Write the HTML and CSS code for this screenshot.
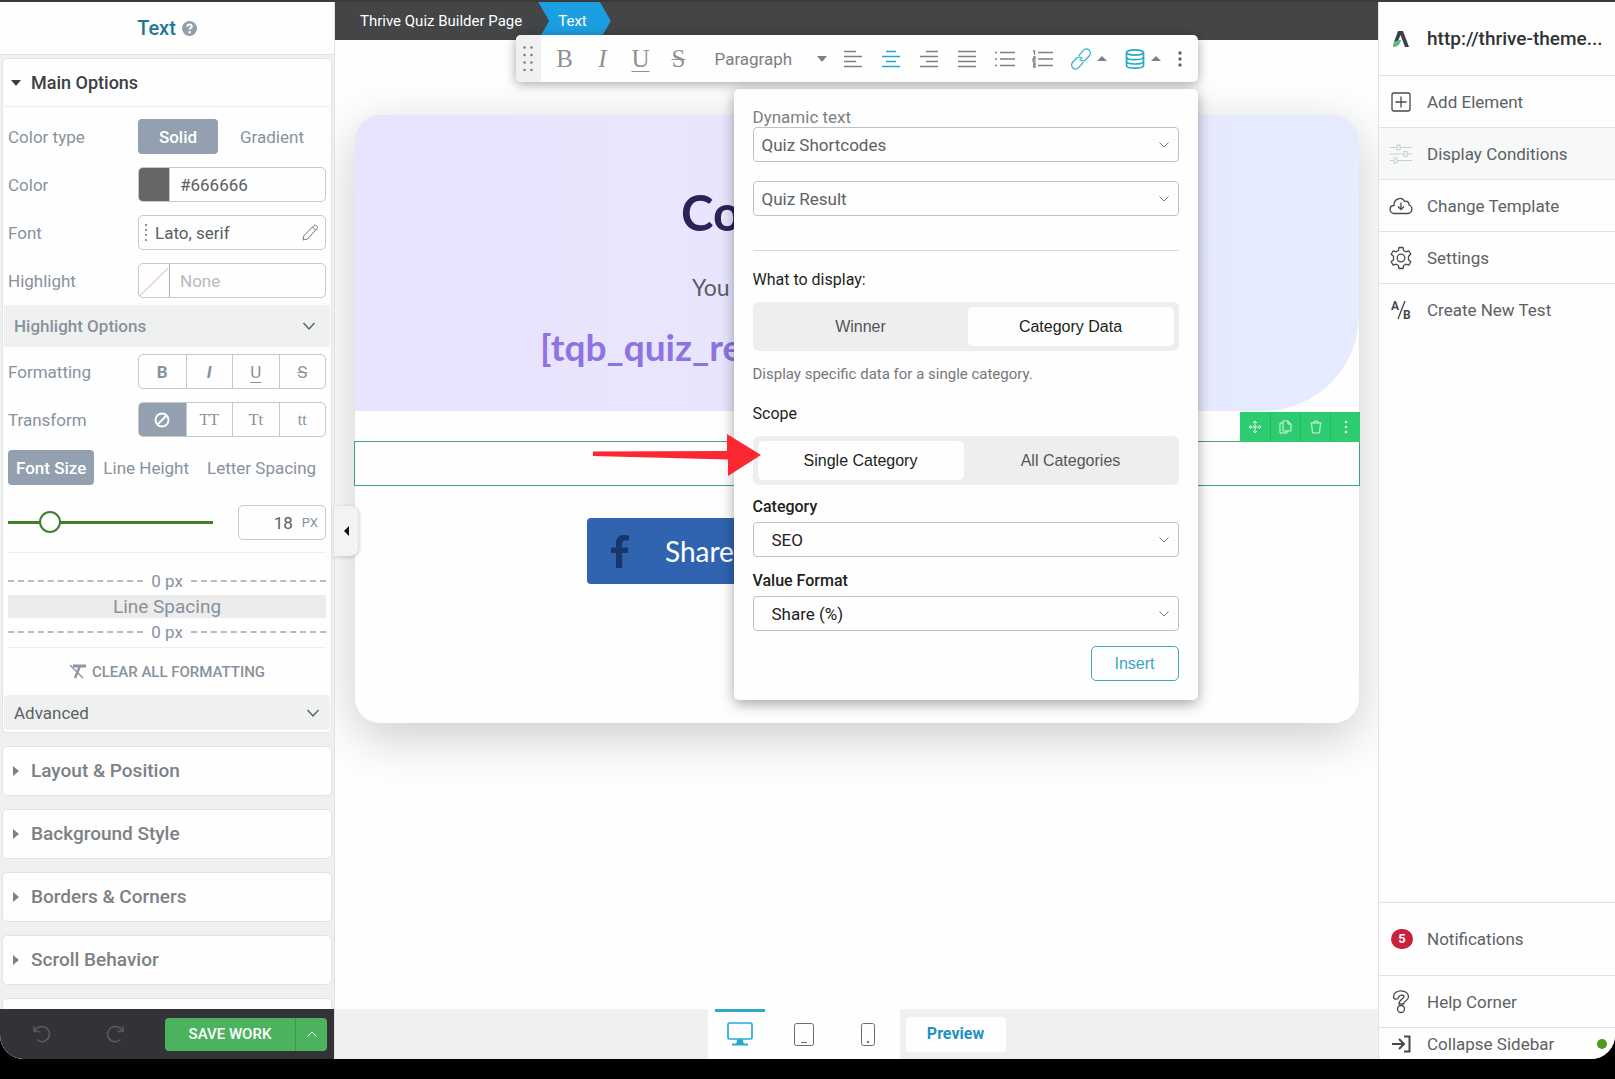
FILE: index.html
```html
<!DOCTYPE html>
<html lang="en">
<head>
    <meta charset="UTF-8">
    <meta name="viewport" content="width=device-width, initial-scale=1.0">
    <title>Thrive Quiz Builder</title>
    <link rel="stylesheet" href="styles.css">
</head>
<body>
    <div class="app">
        <!-- Left settings panel -->
        <aside class="panel">
            <header class="panel-title">
                <h1>Text</h1>
                <svg width="15" height="15" viewBox="0 0 15 15"><circle cx="7.500" cy="7.500" r="7.500" fill="#929fac"/><path d="M5.200 5.800c0-3 4.800-3 4.600-.2-.1 1.500-2.200 1.500-2.200 3" fill="none" stroke="#fff" stroke-width="1.900"/><circle cx="7.600" cy="11.300" r="1.200" fill="#fff"/></svg>
            </header>
            <div class="panel-body">
                <section class="card main-options">
                    <button class="card-head open"><span class="caret-down"></span>Main Options</button>
                    <div class="rows">
                        <div class="row">
                            <span class="name">Color type</span>
                            <div class="control tabs">
                                <button class="tab active">Solid</button>
                                <button class="tab">Gradient</button>
                            </div>
                        </div>
                        <div class="row">
                            <label class="name" for="color">Color</label>
                            <div class="control box">
                                <span class="swatch"></span>
                                <input type="text" id="color" value="#666666">
                            </div>
                        </div>
                        <div class="row">
                            <label class="name" for="font">Font</label>
                            <div class="control box font-box">
                                <svg width="3" height="18" viewBox="0 0 3 18" fill="#8d949a"><rect x="0" y="0" width="2" height="2"/><rect x="0" y="5" width="2" height="2"/><rect x="0" y="10" width="2" height="2"/><rect x="0" y="15" width="2" height="2"/></svg>
                                <input type="text" id="font" value="Lato, serif">
                                <svg width="17" height="17" viewBox="0 0 17 17" fill="none" stroke="#70767b"><path d="M1 16l1-4.500L12 1.500c1.500-1.500 4.500 1.500 3 3L5.500 15z"/><path d="M10.500 3l3.500 3.500"/></svg>
                            </div>
                        </div>
                        <div class="row">
                            <label class="name" for="highlight">Highlight</label>
                            <div class="control box">
                                <svg class="no-color" width="31" height="33" viewBox="0 0 31 33"><path d="M1 32L30 4" stroke="#dda9a9"/></svg>
                                <input type="text" id="highlight" placeholder="None">
                            </div>
                        </div>
                    </div>
                    <button class="drop highlight-options">Highlight Options
                        <svg width="12" height="8" viewBox="0 0 12 8" fill="none" stroke="#5c6368" stroke-width="1.500"><path d="M0.500 1L6 7l5.500-6"/></svg>
                    </button>
                    <div class="rows tight">
                        <div class="row">
                            <span class="name">Formatting</span>
                            <div class="control group">
                                <button><b>B</b></button>
                                <button><b><i>I</i></b></button>
                                <button><u>U</u></button>
                                <button><s>S</s></button>
                            </div>
                        </div>
                        <div class="row">
                            <span class="name">Transform</span>
                            <div class="control group serif">
                                <button class="active" aria-label="No transform">
                                    <svg width="16" height="16" viewBox="0 0 16 16" fill="none" stroke="#fff" stroke-width="2"><circle cx="8" cy="8" r="6.500"/><path d="M4 12l8-8"/></svg>
                                </button>
                                <button>TT</button>
                                <button>Tt</button>
                                <button>tt</button>
                            </div>
                        </div>
                        <div class="tabs size-tabs">
                            <button class="tab active">Font Size</button>
                            <button class="tab">Line Height</button>
                            <button class="tab">Letter Spacing</button>
                        </div>
                    </div>
                    <div class="slider-row">
                        <input type="range" min="0" max="100" value="17" aria-label="Font size">
                        <div class="box px-box">
                            <input type="text" id="size" value="18">
                            <label for="size">PX</label>
                        </div>
                    </div>
                    <div class="spacing">
                        <div class="dash"><span>0 px</span></div>
                        <div class="spacing-bar">Line Spacing</div>
                        <div class="dash"><span>0 px</span></div>
                    </div>
                    <button class="clear">
                        <svg width="17" height="15" viewBox="0 0 17 15" fill="none" stroke="#8b97a3"><path d="M4 2h13" stroke-width="3"/><path d="M10.500 3L6 14" stroke-width="2.500"/><path d="M1 1l13 13" stroke-width="1.500"/></svg>
                        CLEAR ALL FORMATTING
                    </button>
                    <button class="drop advanced">Advanced
                        <svg width="12" height="8" viewBox="0 0 12 8" fill="none" stroke="#5c6368" stroke-width="1.500"><path d="M0.500 1L6 7l5.500-6"/></svg>
                    </button>
                </section>
                <section class="card"><button class="card-head"><span class="caret-right"></span>Layout &amp; Position</button></section>
                <section class="card"><button class="card-head"><span class="caret-right"></span>Background Style</button></section>
                <section class="card"><button class="card-head"><span class="caret-right"></span>Borders &amp; Corners</button></section>
                <section class="card"><button class="card-head"><span class="caret-right"></span>Scroll Behavior</button></section>
                <section class="card"><div class="card-head"></div></section>
            </div>
            <footer class="panel-footer">
                <div class="history">
                    <button aria-label="Undo">
                        <svg width="20" height="20" viewBox="0 0 20 20" fill="none" stroke="#5b5b5f" stroke-width="1.500"><path d="M2 2v5.500h5.500M2.500 7C5 2.500 11 1 15 4.500c4 4 3 10-2 12.500-3 1.200-6 .5-8-1.500"/></svg>
                    </button>
                    <button aria-label="Redo">
                        <svg width="20" height="20" viewBox="0 0 20 20" fill="none" stroke="#5b5b5f" stroke-width="1.500"><path d="M18 2v5.500h-5.500M17.500 7C15 2.500 9 1 5 4.500c-4 4-3 10 2 12.500 3 1.200 6 .5 8-1.500"/></svg>
                    </button>
                </div>
                <div class="save">
                    <button class="save-main">SAVE WORK</button>
                    <button class="save-more" aria-label="More save options">
                        <svg width="10" height="6" viewBox="0 0 10 6" fill="none" stroke="#fff"><path d="M.5 5.500L5 1l4.500 4.500"/></svg>
                    </button>
                </div>
            </footer>
            <button class="panel-toggle" aria-label="Hide panel"><span class="caret-left"></span></button>
        </aside>

        <!-- Editor canvas -->
        <main class="editor">
            <nav class="crumbs">
                <a href="#">Thrive Quiz Builder Page</a>
                <a href="#" class="current">Text</a>
            </nav>
            <div class="canvas">
                <article class="quiz">
                    <div class="quiz-head">
                        <h2>Co</h2>
                        <p>You</p>
                        <strong>[tqb_quiz_re</strong>
                    </div>
                    <div class="selected">
                        <div class="element-tools">
                            <button aria-label="Move"><svg width="14" height="14" viewBox="0 0 14 14" fill="none" stroke="#d8f8e4"><path d="M7 1v12M1 7h12M5 3l2-2 2 2M5 11l2 2 2-2M3 5L1 7l2 2M11 5l2 2-2 2"/></svg></button>
                            <button aria-label="Duplicate"><svg width="13" height="14" viewBox="0 0 13 14" fill="none" stroke="#d8f8e4"><path d="M4 3V1h5l3 3v7H8M9 1v3h3M4 3H1v10h7v-2H4z"/></svg></button>
                            <button aria-label="Delete"><svg width="12" height="14" viewBox="0 0 12 14" fill="none" stroke="#d8f8e4"><path d="M.5 3h11M3.500 3l1-2h3l1 2M1.500 3l1 10h7l1-10"/></svg></button>
                            <button aria-label="More"><svg width="4" height="14" viewBox="0 0 4 14" fill="#d8f8e4"><circle cx="2" cy="2" r="1.300"/><circle cx="2" cy="7" r="1.300"/><circle cx="2" cy="12" r="1.300"/></svg></button>
                        </div>
                    </div>
                    <a href="#" class="share">
                        <svg width="18" height="33" viewBox="0 0 18 33" fill="#17376b"><path d="M5 33V18H0v-5.500h5V8c0-5 3-8 7.500-8 2 0 4 .3 5.500.5v5h-3c-3 0-3.800 1.300-3.800 3.500v3.500H17.500L16.500 18h-5.300v15z"/></svg>
                        Share
                    </a>
                </article>
            </div>
            <footer class="device-bar">
                <div class="devices">
                    <button class="device active" aria-label="Desktop">
                        <svg width="26" height="24" viewBox="0 0 26 24" fill="none" stroke="#27a9cf" stroke-width="1.700"><rect x="1" y="1" width="24" height="16" rx="1.500"/><path d="M5 22.500h16" stroke-width="2"/><path d="M11 18h4l1 4h-6z" fill="#27a9cf"/></svg>
                    </button>
                    <button class="device" aria-label="Tablet">
                        <svg width="20" height="23" viewBox="0 0 20 23" fill="none" stroke="#6d6d6d"><rect x=".5" y=".5" width="19" height="22" rx="2"/><path d="M7 19.500h6"/></svg>
                    </button>
                    <button class="device" aria-label="Mobile">
                        <svg width="14" height="23" viewBox="0 0 14 23" fill="none" stroke="#6d6d6d"><rect x=".5" y=".5" width="13" height="22" rx="2"/><circle cx="7" cy="19" r=".8" fill="#6d6d6d"/></svg>
                    </button>
                </div>
                <button class="preview">Preview</button>
            </footer>

            <!-- Inline text toolbar and its dynamic text popup -->
            <div class="floating">
                <div class="toolbar">
                    <span class="grip">
                        <svg width="10" height="26" viewBox="0 0 10 26" fill="#7c8286"><circle cx="1.500" cy="1.500" r="1.300"/><circle cx="8.500" cy="1.500" r="1.300"/><circle cx="1.500" cy="9" r="1.300"/><circle cx="8.500" cy="9" r="1.300"/><circle cx="1.500" cy="16.500" r="1.300"/><circle cx="8.500" cy="16.500" r="1.300"/><circle cx="1.500" cy="24" r="1.300"/><circle cx="8.500" cy="24" r="1.300"/></svg>
                    </span>
                    <div class="letters">
                        <button>B</button>
                        <button><i>I</i></button>
                        <button><u>U</u></button>
                        <button><s>S</s></button>
                    </div>
                    <div class="block-type">
                        <select aria-label="Block type"><option>Paragraph</option></select>
                        <span class="caret-down"></span>
                    </div>
                    <div class="aligns">
                        <button aria-label="Align left"><svg width="20" height="18" viewBox="0 0 20 18"><path d="M1 1.500h12M1 6.500h18M1 11.500h12M1 16.500h18"/></svg></button>
                        <button class="active" aria-label="Align center"><svg width="20" height="18" viewBox="0 0 20 18"><path d="M5 1.500h10M1 6.500h18M5 11.500h10M1 16.500h18"/></svg></button>
                        <button aria-label="Align right"><svg width="20" height="18" viewBox="0 0 20 18"><path d="M7 1.500h12M1 6.500h18M7 11.500h12M1 16.500h18"/></svg></button>
                        <button aria-label="Justify"><svg width="20" height="18" viewBox="0 0 20 18"><path d="M1 1.500h18M1 6.500h18M1 11.500h18M1 16.500h18"/></svg></button>
                        <button aria-label="Bullet list"><svg width="20" height="18" viewBox="0 0 20 18"><path d="M5 2.500h15M5 9h15M5 15.500h15M0 2.500h2M0 9h2M0 15.500h2"/></svg></button>
                        <button aria-label="Numbered list"><svg width="20" height="18" viewBox="0 0 20 18"><path d="M5 2.500h15M5 9h15M5 15.500h15M0 1h1.500v4M0 7h2v2H0v2h2.500M0 13h2v4H0M0 15h2"/></svg></button>
                    </div>
                    <button class="menu-btn" aria-label="Link">
                        <svg width="20" height="20" viewBox="0 0 20 20" fill="none" stroke="#3cb4d2" stroke-width="1.400"><g transform="rotate(-48 10 10)"><path d="M9 13.500c-.7.500-1.500.5-2 .5H2a4 4 0 0 1 0-8h5c3 0 4.500 2.500 4 5"/><path d="M11 6.500c.7-.5 1.500-.5 2-.5h5a4 4 0 0 1 0 8h-5c-3 0-4.500-2.500-4-5"/></g></svg>
                        <span class="caret-up"></span>
                    </button>
                    <button class="menu-btn" aria-label="Dynamic text">
                        <svg width="20" height="20" viewBox="0 0 20 20" fill="none" stroke="#27a9c6" stroke-width="1.700"><ellipse cx="10" cy="3.500" rx="8.500" ry="2.700"/><path d="M1.500 3.500v13c0 3.600 17 3.600 17 0v-13M1.500 8c0 3.600 17 3.600 17 0M1.500 12.300c0 3.600 17 3.600 17 0"/></svg>
                        <span class="caret-up"></span>
                    </button>
                    <button class="more-btn" aria-label="More"><svg width="4" height="16" viewBox="0 0 4 16" fill="#5f6366"><circle cx="2" cy="2" r="1.700"/><circle cx="2" cy="8" r="1.700"/><circle cx="2" cy="14" r="1.700"/></svg></button>
                </div>
                <form class="popup">
                    <label class="muted" for="source">Dynamic text</label>
                    <div class="select">
                        <select id="source"><option>Quiz Shortcodes</option></select>
                        <svg width="10" height="6" viewBox="0 0 10 6"><path d="M.5.500L5 5 9.500.500"/></svg>
                    </div>
                    <div class="select second">
                        <select aria-label="Shortcode"><option>Quiz Result</option></select>
                        <svg width="10" height="6" viewBox="0 0 10 6"><path d="M.5.500L5 5 9.500.500"/></svg>
                    </div>
                    <hr>
                    <span class="group-name">What to display:</span>
                    <div class="segmented">
                        <button type="button">Winner</button>
                        <button type="button" class="on">Category Data</button>
                    </div>
                    <p class="hint">Display specific data for a single category.</p>
                    <span class="group-name">Scope</span>
                    <div class="segmented">
                        <button type="button" class="on">Single Category</button>
                        <button type="button">All Categories</button>
                    </div>
                    <label class="field-name" for="category">Category</label>
                    <div class="select dark">
                        <select id="category"><option>SEO</option></select>
                        <svg width="10" height="6" viewBox="0 0 10 6"><path d="M.5.500L5 5 9.500.500"/></svg>
                    </div>
                    <label class="field-name" for="format">Value Format</label>
                    <div class="select dark">
                        <select id="format"><option>Share (%)</option></select>
                        <svg width="10" height="6" viewBox="0 0 10 6"><path d="M.5.500L5 5 9.500.500"/></svg>
                    </div>
                    <button type="button" class="insert">Insert</button>
                    <svg class="pointer" width="168" height="42" viewBox="0 0 168 42" fill="#fb2731"><path d="M0 17.500l134-.5V0l34 21-33 21V25.500L0 22z"/></svg>
                </form>
            </div>
        </main>

        <!-- Right sidebar -->
        <aside class="sidebar">
            <a href="#" class="site">
                <svg width="24" height="22" viewBox="0 0 24 22"><path d="M9 3h5l6 16h-4L11.500 7 9 13 5 14z" fill="#3a3f4a"/><path d="M4 19c-.5-5 3-7 8-7-1 4-3 7-8 7z" fill="#5cb87a"/></svg>
                <span>http://thrive-theme...</span>
            </a>
            <a href="#" class="item">
                <svg width="24" height="24" viewBox="0 0 24 24"><rect x="3" y="3" width="18" height="18" rx="2"/><path d="M12 6.500v11M6.500 12h11"/></svg>
                Add Element
            </a>
            <a href="#" class="item shaded">
                <svg width="24" height="24" viewBox="0 0 24 24" class="faint"><path d="M1 5.500h7M11 5.500h12M1 12h14M18 12h5M1 18.500h4M8 18.500h15"/><rect x="8" y="3" width="3" height="5"/><rect x="15" y="9.500" width="3" height="5"/><rect x="5" y="16" width="3" height="5"/></svg>
                Display Conditions
            </a>
            <a href="#" class="item">
                <svg width="24" height="24" viewBox="0 0 24 24"><path d="M5 19.500C-.5 18.500 0 11.500 5 11.500 4.500 4.500 13 2 15.500 7.500c2.500-1 4.800.8 4.500 3.500 4 1.500 4 7.500-1 8.500zM12 8.500v7M9 12.500l3 3 3-3"/></svg>
                Change Template
            </a>
            <a href="#" class="item">
                <svg width="24" height="24" viewBox="0 0 24 24"><circle cx="12" cy="12" r="3.800"/><path d="M10 1.500h4l.6 3 2.200 1.300 3-1 2 3.500-2.300 2v3.400l2.300 2-2 3.500-3-1-2.200 1.300-.6 3h-4l-.6-3-2.200-1.300-3 1-2-3.500 2.300-2v-3.400l-2.300-2 2-3.500 3 1 2.200-1.300z" stroke-linejoin="round"/></svg>
                Settings
            </a>
            <a href="#" class="item last">
                <svg width="24" height="24" viewBox="0 0 24 24"><path d="M9 21L16 3"/><text x="2" y="12">A</text><text x="14" y="21">B</text></svg>
                Create New Test
            </a>
            <div class="sidebar-foot">
                <a href="#" class="item tall"><span class="count">5</span>Notifications</a>
                <a href="#" class="item">
                    <svg width="24" height="24" viewBox="0 0 24 24"><path d="M4.500 7C4.500-1.500 20-1 19.500 7c-.3 4-5 4-5 7h-4.500c-.5-4 5-5 5-7.500 0-2-4.500-2-5.500 1-.8 2.500-5 2-5-.5z"/><circle cx="12" cy="19" r="3.500"/></svg>
                    Help Corner
                </a>
                <a href="#" class="item short">
                    <svg width="24" height="24" viewBox="0 0 24 24" class="bold"><path d="M3 12h12M10 7l5 5-5 5M15 4.500h5.500v15H15"/></svg>
                    Collapse Sidebar
                    <span class="status"></span>
                </a>
            </div>
        </aside>
    </div>
</body>
</html>
```

FILE: styles.css
```css
* {
    box-sizing: border-box;
}
body {
    margin: 0;
    background-color: #000;
    font-family: Roboto, sans-serif;
    font-size: 17px;
    line-height: 20px;
    color: #5d6164;
}
button, input, select {
    font: inherit;
    color: inherit;
    border: none;
    background: none;
    padding: 0;
    margin: 0;
    outline: none;
}
button {
    display: flex;
    align-items: center;
    justify-content: center;
    cursor: pointer;
}
select {
    appearance: none;
}
svg {
    overflow: visible;
}
a {
    color: inherit;
    text-decoration: none;
}
h1, h2, p {
    margin: 0;
}
.app {
    display: grid;
    grid-template-columns: 335px 1fr 237px;
    height: calc(100vh - 20px);
    border-top: 2px solid #3a3a3b;
    border-radius: 0 0 24px 24px;
    background-color: #fefefe;
    overflow: hidden;
}

/* carets */
.caret-down, .caret-up {
    border-left: 5px solid transparent;
    border-right: 5px solid transparent;
}
.caret-down {
    border-top: 6px solid currentColor;
}
.caret-up {
    border-bottom: 5px solid #7c8083;
}
.caret-left, .caret-right {
    border-top: 5px solid transparent;
    border-bottom: 5px solid transparent;
}
.caret-right {
    border-left: 6px solid currentColor;
    margin: 0 2px;
}
.caret-left {
    border-right: 5px solid #111;
}

/* left panel */
.panel {
    position: relative;
    display: grid;
    grid-template-rows: 53px 1fr 50px;
    min-height: 0;
    background-color: #eff1f1;
    border-right: 1px solid #dfe3e4;
    color: #87929d;
    z-index: 2;
}
.panel-title {
    display: flex;
    align-items: center;
    justify-content: center;
    gap: 6px;
    background-color: #fefefe;
    border-bottom: 1px solid #dde3e4;
}
.panel-title h1 {
    font-size: 20px;
    font-weight: 500;
    color: #1f7896;
}
.panel-body {
    display: flex;
    flex-direction: column;
    gap: 13px;
    padding: 3px 2px 0;
    overflow: hidden;
}
.card {
    flex: none;
    background-color: #fefefe;
    border: 1px solid #e0e4e5;
    border-radius: 5px;
}
.card-head {
    width: 100%;
    height: 48px;
    justify-content: flex-start;
    gap: 10px;
    padding-left: 8px;
    font-size: 19px;
    font-weight: 500;
    color: #7b8186;
}
.card-head.open {
    padding-left: 7px;
    border-bottom: 1px solid #eaeeef;
    font-size: 18px;
    color: #3c4044;
}
.main-options {
    padding: 0 1px 2px;
}
.rows {
    display: flex;
    flex-direction: column;
    gap: 13px;
    padding: 12px 4px 7px;
}
.rows.tight {
    padding-bottom: 0;
}
.row {
    display: flex;
    align-items: center;
    justify-content: space-between;
}
.control {
    width: 188px;
    height: 35px;
}
.tabs {
    display: flex;
}
.tab {
    flex: 1;
    height: 35px;
    border-radius: 4px;
}
.tabs.control .tab:first-child {
    flex: none;
    width: 80px;
}
.tab.active {
    background-color: #92a0b0;
    color: #fff;
    font-weight: 500;
}
.size-tabs .tab {
    flex: none;
    padding: 0 9px;
}
.size-tabs .active {
    padding: 0 8px;
}
.box {
    display: flex;
    align-items: center;
    border: 1px solid #c3c8cb;
    border-radius: 5px;
    overflow: hidden;
}
.box input {
    flex: 1;
    min-width: 0;
    padding-left: 10px;
    color: #5a5e62;
}
.box input::placeholder {
    color: #b5babe;
}
.swatch {
    width: 31px;
    height: 100%;
    background-color: #666;
    border-right: 1px solid #c3c8cb;
}
.no-color {
    border-right: 1px solid #a9adb0;
}
.font-box {
    padding: 0 6px;
}
.font-box input {
    padding-left: 7px;
}
.drop {
    width: 100%;
    height: 35px;
    justify-content: space-between;
    padding: 0 11px 0 10px;
    background-color: #eff1f1;
    border-radius: 4px;
    color: #5d6164;
}
.highlight-options {
    height: 42px;
    padding-right: 15px;
    color: #87929d;
    font-weight: 500;
    border-radius: 0;
}
.rows.tight {
    padding-top: 7px;
}
.group {
    display: grid;
    grid-template-columns: repeat(4, 1fr);
    border: 1px solid #c3c8cb;
    border-radius: 5px;
    overflow: hidden;
}
.group button + button {
    border-left: 1px solid #c3c8cb;
}
.group u {
    text-underline-offset: 4px;
}
.group .active {
    background-color: #92a0b0;
}
.serif {
    font-family: "Liberation Serif", serif;
    font-size: 16px;
}
.slider-row {
    display: flex;
    align-items: center;
    justify-content: space-between;
    margin: 0 4px;
    padding: 20px 0 12px;
    border-bottom: 1px solid #eaeeef;
}
input[type="range"] {
    appearance: none;
    width: 205px;
    height: 22px;
}
input[type="range"]::-webkit-slider-runnable-track {
    height: 3px;
    background-color: #40802c;
}
input[type="range"]::-webkit-slider-thumb {
    appearance: none;
    width: 22px;
    height: 22px;
    margin-top: -10px;
    border: 2px solid #40802c;
    border-radius: 50%;
    background-color: #fefefe;
}
.px-box {
    width: 88px;
    height: 35px;
    padding-right: 7px;
}
.px-box input {
    text-align: right;
}
.px-box label {
    margin-left: 9px;
    font-size: 13px;
}
.spacing {
    display: flex;
    flex-direction: column;
    gap: 4px;
    margin: 0 4px;
    padding: 18px 0 5px;
    border-bottom: 1px solid #eaeeef;
}
.dash {
    display: flex;
    align-items: center;
    gap: 8px;
}
.dash::before, .dash::after {
    content: "";
    flex: 1;
    border-top: 2px dashed #b5bcc2;
}
.spacing-bar {
    background-color: #ececec;
    font-size: 19px;
    line-height: 23px;
    text-align: center;
}
.clear {
    width: 100%;
    height: 47px;
    gap: 6px;
    font-size: 15px;
    font-weight: 500;
}
.panel-footer {
    display: flex;
    align-items: center;
    justify-content: space-between;
    padding: 0 7px 0 32px;
    background-color: #333337;
}
.history {
    display: flex;
    gap: 53px;
}
.save {
    display: flex;
    height: 33px;
    border-radius: 4px;
    background-color: #4bb35e;
    color: #fff;
    overflow: hidden;
}
.save-main {
    width: 130px;
    font-size: 15px;
    font-weight: 500;
}
.save-more {
    width: 32px;
    border-left: 1px solid #3c9a4d;
}
.panel-toggle {
    position: absolute;
    top: 504px;
    right: -24px;
    width: 24px;
    height: 50px;
    border-radius: 0 8px 8px 0;
    background-color: #f2f3f3;
    box-shadow: 1px 1px 4px rgba(0, 0, 0, 0.2);
}

/* editor */
.editor {
    position: relative;
    display: grid;
    grid-template-rows: 38px 1fr 50px;
    min-width: 0;
    min-height: 0;
}
.crumbs {
    display: flex;
    align-items: center;
    padding-left: 25px;
    background-color: #444546;
    color: #fff;
    font-size: 15px;
}
.crumbs .current {
    margin-left: 16px;
    padding: 9px 24px 9px 20px;
    background-color: #1c9fe2;
    clip-path: polygon(0 0, 85% 0, 100% 50%, 85% 100%, 0 100%, 15% 50%);
}
.canvas {
    padding: 75px 19px 0 20px;
    overflow: hidden;
}
.quiz {
    padding-bottom: 139px;
    border-radius: 25px;
    background-color: #fefefe;
    box-shadow: 0 14px 50px rgba(0, 0, 0, 0.2);
    font-family: Lato, sans-serif;
}
.quiz-head {
    padding: 67px 0 42px;
    border-radius: 25px 25px 96px 0;
    background: linear-gradient(90deg, #e9e3fd, #e6ebfe);
}
.quiz-head h2 {
    margin-bottom: 30px;
    padding-left: 326px;
    font-size: 49px;
    line-height: 60px;
    color: #2e2058;
}
.quiz-head p {
    margin-bottom: 23px;
    padding-left: 337px;
    font-size: 23px;
    line-height: 30px;
    color: #5c5a66;
}
.quiz-head strong {
    display: block;
    padding-left: 185px;
    font-size: 37px;
    line-height: 44px;
    color: #8f73e2;
}
.selected {
    position: relative;
    height: 45px;
    margin: 30px -1px 32px;
    border: 1px solid #3aa76d;
}
.element-tools {
    position: absolute;
    right: -1px;
    bottom: 43px;
    display: flex;
    background-color: #2dcc70;
}
.element-tools button {
    width: 30px;
    height: 30px;
}
.element-tools button + button {
    border-left: 1px solid #27b863;
}
.share {
    display: flex;
    align-items: center;
    gap: 36px;
    width: 540px;
    height: 66px;
    margin: 0 auto;
    padding-left: 24px;
    border-radius: 4px;
    background-color: #3064b0;
    color: #fff;
    font-size: 28px;
}
.device-bar {
    display: flex;
    justify-content: center;
    align-items: center;
    gap: 6px;
    background-color: #eff1f1;
}
.devices {
    display: flex;
    gap: 14px;
    align-self: stretch;
    padding: 0 7px;
    background-color: #fefefe;
}
.device {
    width: 50px;
    padding-bottom: 3px;
    border-top: 3px solid transparent;
}
.device.active {
    border-top-color: #30a9c4;
}
.preview {
    width: 100px;
    height: 35px;
    border-radius: 4px;
    background-color: #fefefe;
    color: #2391c2;
    font-size: 16px;
    font-weight: 700;
}

/* floating toolbar */
.floating {
    position: absolute;
    top: 33px;
    left: 0;
    right: 0;
    display: flex;
    flex-direction: column;
    gap: 7px;
    width: 682px;
    margin: 0 auto;
}
.toolbar {
    display: flex;
    height: 47px;
    border-radius: 5px;
    background-color: #fefefe;
    box-shadow: 0 2px 12px rgba(0, 0, 0, 0.35);
    color: #7c8083;
}
.grip {
    display: flex;
    align-items: center;
    justify-content: center;
    width: 25px;
    margin-right: 5px;
    border-radius: 5px 0 0 5px;
    background-color: #eff1f1;
}
.letters {
    display: flex;
    font-family: "Liberation Serif", serif;
    font-size: 25px;
    color: #8d9194;
}
.letters button {
    width: 38px;
}
.letters u {
    text-decoration-thickness: 1px;
    text-underline-offset: 4px;
}
.letters s {
    text-decoration-thickness: 1px;
}
.block-type {
    display: flex;
    align-items: center;
    width: 136px;
    padding: 0 7px 0 17px;
}
.block-type select {
    flex: 1;
}
.aligns {
    display: flex;
}
.aligns button {
    width: 38px;
}
.aligns svg {
    stroke: #7c8083;
    stroke-width: 1.3;
    fill: none;
}
.aligns .active svg {
    stroke: #27a9c6;
}
.menu-btn {
    width: 54px;
    gap: 6px;
}
.more-btn {
    width: 20px;
}

/* dynamic text popup */
.popup {
    position: relative;
    display: flex;
    flex-direction: column;
    width: 464px;
    margin-left: auto;
    padding: 18px 19px 19px;
    border-radius: 5px;
    background-color: #fefefe;
    box-shadow: 0 4px 14px rgba(0, 0, 0, 0.35);
}
.muted {
    color: #7c8083;
}
.select {
    display: grid;
    align-items: center;
}
.select select, .select svg {
    grid-area: 1 / 1;
}
.select select {
    height: 35px;
    padding-left: 8px;
    border: 1px solid #bfc2c4;
    border-radius: 4px;
}
.select svg {
    justify-self: end;
    margin-right: 10px;
    fill: none;
    stroke: #70767b;
    pointer-events: none;
}
.select.second {
    margin-top: 19px;
}
.select.dark select {
    padding-left: 18px;
    color: #222;
}
.popup hr {
    width: 100%;
    margin: 34px 0 19px;
    border: none;
    border-top: 1px solid #d5d8d9;
}
.group-name, .field-name {
    font-size: 16px;
    color: #1d1f20;
}
.segmented {
    display: grid;
    grid-template-columns: 1fr 1fr;
    gap: 4px;
    height: 49px;
    margin: 12px 0;
    padding: 5px;
    border-radius: 6px;
    background-color: #eee;
    font-family: "Liberation Sans", Arial, sans-serif;
    font-size: 16px;
    color: #555;
}
.segmented button {
    border-radius: 5px;
}
.segmented .on {
    background-color: #fefefe;
    color: #1d1f20;
}
.hint {
    margin: 1px 0 20px;
    font-size: 15px;
    color: #777;
}
.field-name {
    margin-bottom: 5px;
    font-weight: 500;
}
.select + .field-name {
    margin-top: 14px;
}
.insert {
    align-self: flex-end;
    width: 88px;
    height: 35px;
    margin-top: 15px;
    border: 1px solid #3fa9be;
    border-radius: 5px;
    color: #36a6c4;
    font-family: "Liberation Sans", Arial, sans-serif;
    font-size: 16px;
}
.pointer {
    position: absolute;
    top: 345px;
    left: -141px;
}

/* right sidebar */
.sidebar {
    display: flex;
    flex-direction: column;
    background-color: #fefefe;
    border-left: 1px solid #dfe3e4;
    z-index: 1;
}
.site, .item {
    display: flex;
    align-items: center;
    gap: 14px;
    height: 52px;
    padding-left: 10px;
    border-bottom: 1px solid #e0e4e6;
}
.site {
    height: 74px;
    font-size: 19px;
    font-weight: 500;
    color: #2f3336;
}
.item svg {
    fill: none;
    stroke: #45494c;
    stroke-width: 1.3;
}
.item svg.faint {
    stroke: #c9cdcf;
    stroke-width: 1;
}
.item svg.bold {
    stroke-width: 2;
}
.item text {
    fill: #45494c;
    stroke: none;
    font-size: 12px;
    font-weight: 700;
}
.shaded {
    background-color: #f7f9f9;
}
.item.last {
    border-bottom: none;
}
.sidebar-foot {
    margin-top: auto;
    border-top: 1px solid #e0e4e6;
}
.item.tall {
    height: 73px;
    padding-left: 12px;
}
.item.short {
    height: 31px;
    border-bottom: none;
}
.count {
    width: 22px;
    border-radius: 10px;
    background-color: #c9203c;
    color: #fff;
    font-size: 13px;
    font-weight: 700;
    text-align: center;
}
.status {
    width: 10px;
    height: 10px;
    margin-left: auto;
    margin-right: 8px;
    border-radius: 50%;
    background-color: #4f9a1c;
}
```
